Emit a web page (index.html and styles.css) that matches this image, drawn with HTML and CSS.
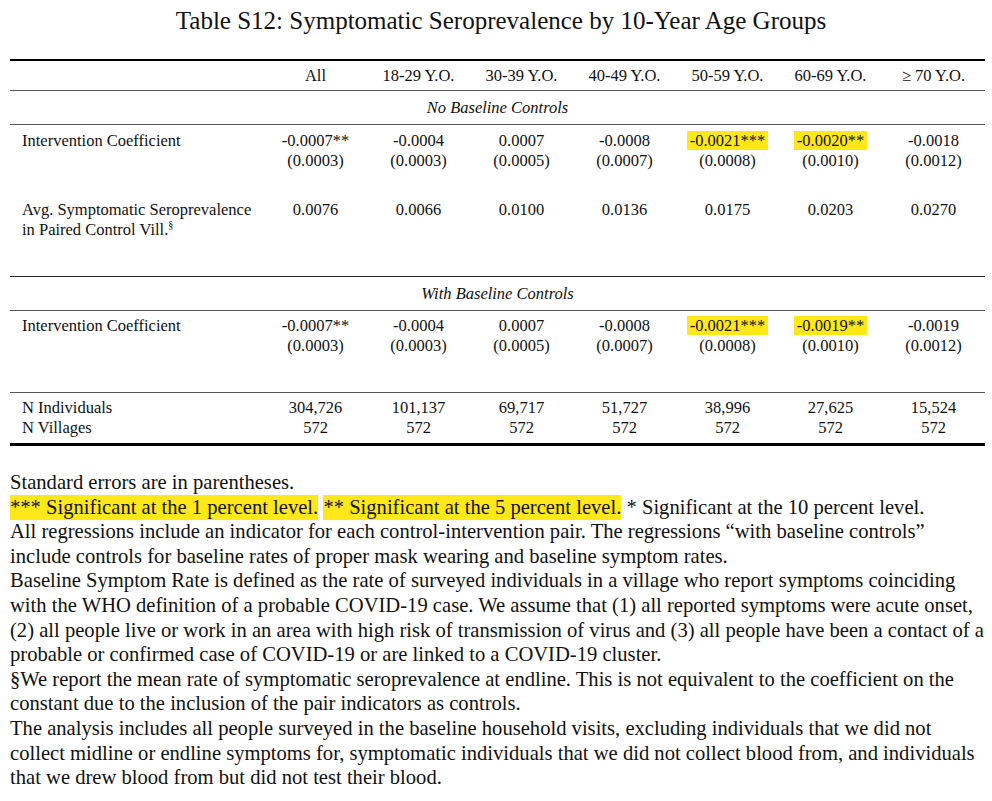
FILE: index.html
```html
<!DOCTYPE html>
<html lang="en">

<head>
  <meta charset="UTF-8">
  <title>Table S12</title>
  <link rel="stylesheet" href="styles.css">
</head>

<body>
  <div class="page">
    <h1 class="title">Table S12: Symptomatic Seroprevalence by 10-Year Age Groups</h1>

    <table class="results">
      <colgroup>
        <col class="col-label">
        <col class="col-num"><col class="col-num"><col class="col-num"><col class="col-num">
        <col class="col-num"><col class="col-num"><col class="col-num">
      </colgroup>
      <tr class="head-row">
        <td></td>
        <td>All</td>
        <td>18-29 Y.O.</td>
        <td>30-39 Y.O.</td>
        <td>40-49 Y.O.</td>
        <td>50-59 Y.O.</td>
        <td>60-69 Y.O.</td>
        <td>&ge; 70 Y.O.</td>
      </tr>
      <tr class="section-row">
        <td colspan="8">No Baseline Controls</td>
      </tr>
      <tr class="coef-row first-coef">
        <td class="label">Intervention Coefficient</td>
        <td>-0.0007**<br>(0.0003)</td>
        <td>-0.0004<br>(0.0003)</td>
        <td>0.0007<br>(0.0005)</td>
        <td>-0.0008<br>(0.0007)</td>
        <td><span class="mark">-0.0021***</span><br>(0.0008)</td>
        <td><span class="mark">-0.0020**</span><br>(0.0010)</td>
        <td>-0.0018<br>(0.0012)</td>
      </tr>
      <tr class="avg-row">
        <td class="label">Avg. Symptomatic Seroprevalence<br>in Paired Control Vill.<sup>&sect;</sup></td>
        <td>0.0076</td>
        <td>0.0066</td>
        <td>0.0100</td>
        <td>0.0136</td>
        <td>0.0175</td>
        <td>0.0203</td>
        <td>0.0270</td>
      </tr>
      <tr class="section-row">
        <td colspan="8">With Baseline Controls</td>
      </tr>
      <tr class="coef-row second-coef">
        <td class="label">Intervention Coefficient</td>
        <td>-0.0007**<br>(0.0003)</td>
        <td>-0.0004<br>(0.0003)</td>
        <td>0.0007<br>(0.0005)</td>
        <td>-0.0008<br>(0.0007)</td>
        <td><span class="mark">-0.0021***</span><br>(0.0008)</td>
        <td><span class="mark">-0.0019**</span><br>(0.0010)</td>
        <td>-0.0019<br>(0.0012)</td>
      </tr>
      <tr class="count-row">
        <td class="label">N Individuals<br>N Villages</td>
        <td>304,726<br>572</td>
        <td>101,137<br>572</td>
        <td>69,717<br>572</td>
        <td>51,727<br>572</td>
        <td>38,996<br>572</td>
        <td>27,625<br>572</td>
        <td>15,524<br>572</td>
      </tr>
    </table>

    <div class="notes">
      <p>Standard errors are in parentheses.</p>
      <p><span class="mark-note">*** Significant at the 1 percent level.</span> <span class="mark-note">** Significant at the 5 percent level.</span> * Significant at the 10 percent level.</p>
      <p>All regressions include an indicator for each control-intervention pair. The regressions &ldquo;with baseline controls&rdquo;<br>include controls for baseline rates of proper mask wearing and baseline symptom rates.</p>
      <p>Baseline Symptom Rate is defined as the rate of surveyed individuals in a village who report symptoms coinciding<br>with the WHO definition of a probable COVID-19 case. We assume that (1) all reported symptoms were acute onset,<br>(2) all people live or work in an area with high risk of transmission of virus and (3) all people have been a contact of a<br>probable or confirmed case of COVID-19 or are linked to a COVID-19 cluster.</p>
      <p>&sect;We report the mean rate of symptomatic seroprevalence at endline. This is not equivalent to the coefficient on the<br>constant due to the inclusion of the pair indicators as controls.</p>
      <p>The analysis includes all people surveyed in the baseline household visits, excluding individuals that we did not<br>collect midline or endline symptoms for, symptomatic individuals that we did not collect blood from, and individuals<br>that we drew blood from but did not test their blood.</p>
    </div>
  </div>
</body>

</html>
```

FILE: styles.css
```css
body {
  margin: 0;
  background-color: #fff;
  color: #111;
  font-family: "Liberation Serif", "Times New Roman", serif;
}

.page {
  width: 992px;
  padding: 0 0 0 10px;
  box-sizing: border-box;
}

.title {
  margin: 0;
  padding-top: 6px;
  height: 59px;
  box-sizing: border-box;
  text-align: center;
  font-size: 25px;
  font-weight: normal;
  line-height: 30px;
}

.results {
  width: 975px;
  table-layout: fixed;
  border-collapse: collapse;
  font-size: 16.5px;
  line-height: 20px;
}

.col-label {
  width: 254px;
}

.col-num {
  width: 103px;
}

.results td {
  padding: 0;
  text-align: center;
  vertical-align: top;
  white-space: nowrap;
}

.results td.label {
  text-align: left;
  padding-left: 12px;
}

.head-row td {
  border-top: 2px solid #000;
  border-bottom: 1px solid #555;
  padding: 5px 0 4px;
}

.section-row td {
  font-style: italic;
  padding: 7px 0 6px;
  border-bottom: 1px solid #555;
}

.first-coef td {
  padding: 6px 0 14px;
}

.avg-row td {
  padding: 15px 0 36px;
  border-bottom: 1px solid #222;
}

.avg-row sup {
  font-size: 10px;
  line-height: 0;
  vertical-align: 7px;
}

.second-coef td {
  padding: 5px 0 36px;
  border-bottom: 1px solid #555;
}

.count-row td {
  padding: 5px 0 5px;
  border-bottom: 3px solid #000;
}

.mark {
  background-color: #ffe81a;
  padding: 0 3px;
}

.notes {
  margin-top: 24px;
  font-size: 20.6px;
  line-height: 24.6px;
  white-space: nowrap;
}

.notes p {
  margin: 0;
}

.mark-note {
  background-color: #ffe81a;
  padding: 1px 0 2px;
}
```
